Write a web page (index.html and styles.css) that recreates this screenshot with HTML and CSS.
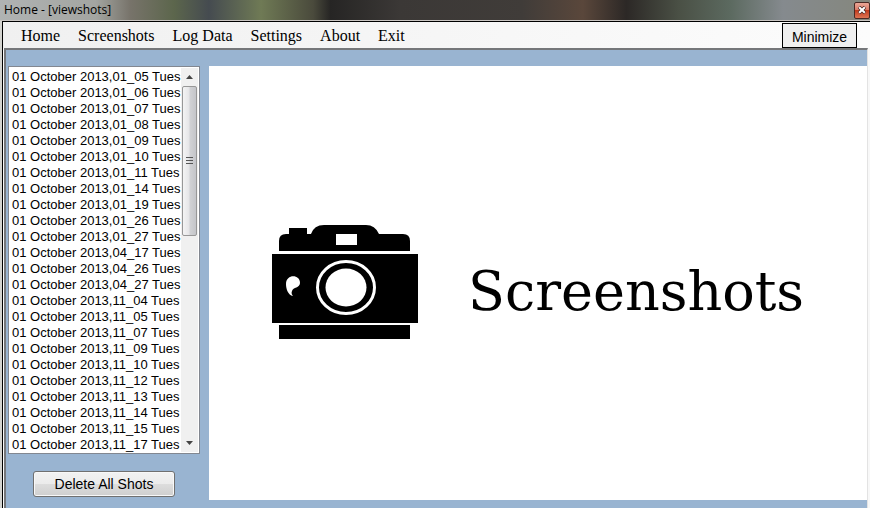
FILE: index.html
```html
<!DOCTYPE html>
<html lang="en">
<head>
    <meta charset="UTF-8">
    <meta name="viewport" content="width=device-width, initial-scale=1.0">
    <title>Home - [viewshots]</title>
    <link rel="stylesheet" href="styles.css">
</head>
<body>

<div class="titlebar">
    <span class="title">Home - [viewshots]</span>
    <button type="button" class="close" aria-label="Close">
        <svg width="8" height="8" viewBox="0 0 8 8">
            <path d="M1 1L7 7M7 1L1 7" stroke="#4a2a26" stroke-width="3.6"/>
            <path d="M1.2 1.2L6.8 6.8M6.8 1.2L1.2 6.8" stroke="#fff" stroke-width="2"/>
        </svg>
    </button>
</div>

<div class="window">
    <nav class="menubar">
        <a href="#home">Home</a>
        <a href="#screenshots">Screenshots</a>
        <a href="#log">Log Data</a>
        <a href="#settings">Settings</a>
        <a href="#about">About</a>
        <a href="#exit">Exit</a>
        <button type="button" class="minimize">Minimize</button>
    </nav>

    <main class="client">
        <div class="sidebar">
            <div class="listbox">
                <select class="shots" size="24" aria-label="Saved shots">
                    <option>01 October 2013,01_05 Tues</option>
                    <option>01 October 2013,01_06 Tues</option>
                    <option>01 October 2013,01_07 Tues</option>
                    <option>01 October 2013,01_08 Tues</option>
                    <option>01 October 2013,01_09 Tues</option>
                    <option>01 October 2013,01_10 Tues</option>
                    <option>01 October 2013,01_11 Tues</option>
                    <option>01 October 2013,01_14 Tues</option>
                    <option>01 October 2013,01_19 Tues</option>
                    <option>01 October 2013,01_26 Tues</option>
                    <option>01 October 2013,01_27 Tues</option>
                    <option>01 October 2013,04_17 Tues</option>
                    <option>01 October 2013,04_26 Tues</option>
                    <option>01 October 2013,04_27 Tues</option>
                    <option>01 October 2013,11_04 Tues</option>
                    <option>01 October 2013,11_05 Tues</option>
                    <option>01 October 2013,11_07 Tues</option>
                    <option>01 October 2013,11_09 Tues</option>
                    <option>01 October 2013,11_10 Tues</option>
                    <option>01 October 2013,11_12 Tues</option>
                    <option>01 October 2013,11_13 Tues</option>
                    <option>01 October 2013,11_14 Tues</option>
                    <option>01 October 2013,11_15 Tues</option>
                    <option>01 October 2013,11_17 Tues</option>
                </select>
                <div class="scrollbar">
                    <button type="button" class="arrow" aria-label="Scroll up">
                        <svg width="7" height="4" viewBox="0 0 7 4"><path d="M0 4L3.5 0L7 4Z" fill="#444"/></svg>
                    </button>
                    <div class="track">
                        <div class="thumb">
                            <svg width="7" height="8" viewBox="0 0 7 8"><path d="M0 .5H7M0 3.5H7M0 6.5H7" stroke="#555"/></svg>
                        </div>
                    </div>
                    <button type="button" class="arrow" aria-label="Scroll down">
                        <svg width="7" height="4" viewBox="0 0 7 4"><path d="M0 0L3.5 4L7 0Z" fill="#444"/></svg>
                    </button>
                </div>
            </div>
            <button type="button" class="delete">Delete All Shots</button>
        </div>

        <section class="preview">
            <svg class="camera" width="146" height="116" viewBox="0 0 146 116">
                <path d="M7 27V17Q7 10 14 10H17V4H35V10H39Q42 1 52 1H94Q103 1 107 10H131Q138 10 138 17V27Z"/>
                <rect x="64" y="10" width="21" height="11" fill="#fff"/>
                <rect x="0" y="30" width="146" height="69"/>
                <rect x="7" y="101" width="131" height="14"/>
                <ellipse cx="74" cy="63.500" rx="28.500" ry="26" fill="none" stroke="#fff" stroke-width="3"/>
                <ellipse cx="74" cy="63.500" rx="20.500" ry="19" fill="#fff"/>
                <path d="M14 60C14 50 28 50 28 59C28 64 21 63 20 67C19 69 20 71 21 72C16 71 14 65 14 60Z" fill="#fff"/>
            </svg>
            <h1>Screenshots</h1>
        </section>
    </main>
</div>

</body>
</html>
```
FILE: styles.css
```css
* {
    box-sizing: border-box;
}
body {
    margin: 0;
    min-height: 100vh;
    display: flex;
    flex-direction: column;
    background: #d4d4d0;
    color: #000;
    font-family: "Liberation Sans", Arial, sans-serif;
    font-size: 14px;
}
button {
    padding: 0;
    color: #000;
    font: inherit;
    cursor: pointer;
}

/* Title bar */
.titlebar {
    height: 21px;
    display: flex;
    justify-content: space-between;
    align-items: center;
    padding-left: 4px;
    border-bottom: 1px solid #c9c5c2;
    background: linear-gradient(to right, #b0b3b3 0, #a3a5a1 11%, #77736a 15%, #5c664c 20%, #454b50 24%, #6f7a55 30%, #4a4a3c 36%, #262524 38%, #3b3836 46%, #403c39 60%, #5a473b 67%, #2c2826 72%, #4a5045 78%, #5c6a60 84%, #858a8e 90%, #85877d 100%);
}
.title {
    font-family: "Open Sans", "Segoe UI", sans-serif;
    font-size: 12px;
    line-height: 20px;
}
.close {
    width: 16px;
    height: 17px;
    display: flex;
    justify-content: center;
    align-items: center;
    border: 1px solid #4b2a25;
    border-radius: 2px;
    background: linear-gradient(#eba797 0, #dc7c68 45%, #c23c1e 50%, #dd7453 100%);
}

/* Window frame */
.window {
    flex: 1;
    display: flex;
    flex-direction: column;
    margin-left: 2px;
    border-top: 1px solid #000;
    border-left: 1px solid #000;
    background: #f8f8f8;
}
.menubar {
    height: 26px;
    display: flex;
    align-items: center;
    gap: 18px;
    padding: 0 13px 0 18px;
    background: linear-gradient(to right, #f0f0f0, #fcfcfc);
    font-family: "Liberation Serif", Georgia, serif;
    font-size: 16px;
}
.menubar a {
    padding-top: 2px;
    color: #000;
    text-decoration: none;
}
.minimize {
    width: 75px;
    height: 25px;
    margin-left: auto;
    padding-top: 4px;
    border: 1px solid #000;
    background: #f0f0f0;
    font-family: "Liberation Sans", Arial, sans-serif;
    font-size: 14px;
}
.client {
    flex: 1;
    display: flex;
    gap: 9px;
    margin: 0 2px 0 1px;
    padding: 16px 0 8px 2px;
    border-top: 2px solid #75777a;
    border-left: 2px solid #75777a;
    border-right: 1px solid #e3e3e3;
    background: #99b4d1;
}

/* Shot list */
.sidebar {
    width: 192px;
    display: flex;
    flex-direction: column;
    align-items: center;
    gap: 17px;
    padding-bottom: 3px;
}
.listbox {
    flex: 1;
    align-self: stretch;
    display: flex;
    padding: 1px;
    border: 1px solid #828790;
    background: #fff;
}
.shots {
    flex: 1;
    min-width: 0;
    padding: 0;
    border: none;
    outline: none;
    overflow: hidden;
    background: #fff;
    color: #000;
    font-family: "Liberation Sans", Arial, sans-serif;
    font-size: 13px;
}
.shots option {
    height: 16px;
    min-height: 16px;
    padding: 1px 2px 0;
    line-height: 16px;
}
.scrollbar {
    width: 17px;
    display: flex;
    flex-direction: column;
    background: #f0f0f0;
}
.arrow {
    height: 18px;
    display: flex;
    justify-content: center;
    align-items: center;
    border: none;
    background: none;
}
.track {
    flex: 1;
}
.thumb {
    height: 43%;
    display: flex;
    justify-content: center;
    align-items: center;
    margin: 0 1px;
    border: 1px solid #979797;
    border-radius: 2px;
    background: linear-gradient(to right, #f4f4f4 0, #e6e6e8 45%, #d0d1d4 55%, #c4c5c9 100%);
}
.delete {
    width: 142px;
    height: 26px;
    border: 1px solid #707070;
    border-radius: 3px;
    background: linear-gradient(#f2f2f2 0, #ebebeb 50%, #dddddd 50%, #cfcfcf 100%);
    box-shadow: inset 0 0 0 1px #f8f8f8;
}

/* Preview */
.preview {
    flex: 1;
    display: flex;
    justify-content: center;
    align-items: center;
    gap: 50px;
    padding-bottom: 2px;
    background: #fff;
}
.preview h1 {
    margin: 0;
    padding-top: 20px;
    font-family: "DejaVu Serif", Georgia, serif;
    font-size: 54px;
    font-weight: normal;
    line-height: 64px;
}
```
